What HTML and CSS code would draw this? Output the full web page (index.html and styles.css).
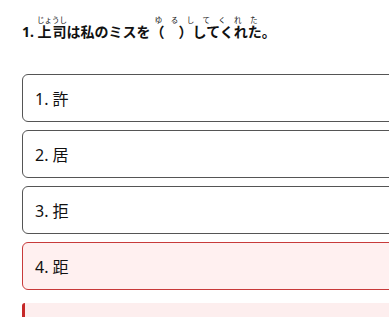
FILE: index.html
```html
<!DOCTYPE html>
<html lang="ja">
<head>
    <meta charset="UTF-8">
    <meta name="viewport" content="width=device-width, initial-scale=1.0">
    <title>文法問題</title>
    <link rel="stylesheet" href="styles.css">
</head>
<body>
    <div class="quiz">
        <h2 class="question">1. <ruby>上司<rt>じょうし</rt></ruby>は私のミスを<ruby>（　）してくれた<rt>ゆるしてくれた</rt></ruby>。</h2>

        <div class="options">
            <div class="option">1. 許</div>
            <div class="option">2. 居</div>
            <div class="option">3. 拒</div>
            <div class="option wrong">4. 距</div>
        </div>

        <div class="feedback"></div>
    </div>
</body>
</html>
```

FILE: styles.css
```css
html {
    overflow: hidden;
}

body {
    margin: 0;
    font-family: "Noto Sans", "Noto Sans CJK JP", sans-serif;
    color: #111;
    background: #fff;
}

.quiz {
    width: 420px;
    padding: 16px 22px;
}

.question {
    font-size: 14px;
    font-weight: 700;
    line-height: 28px;
    margin: 0 0 28px 0;
}

.question rt {
    font-size: 7.5px;
    font-weight: 400;
}

.options {
    display: flex;
    flex-direction: column;
    gap: 8px;
}

.option {
    height: 46px;
    display: flex;
    align-items: center;
    padding: 0 12px;
    border: 1px solid #555;
    border-radius: 6px;
    font-size: 16px;
}

.option.wrong {
    background-color: #fff0f0;
    border-color: #c83a3a;
}

.feedback {
    margin-top: 13px;
    height: 40px;
    background-color: #fdeeee;
    border-left: 3px solid #c62828;
    border-radius: 3px;
}
```
